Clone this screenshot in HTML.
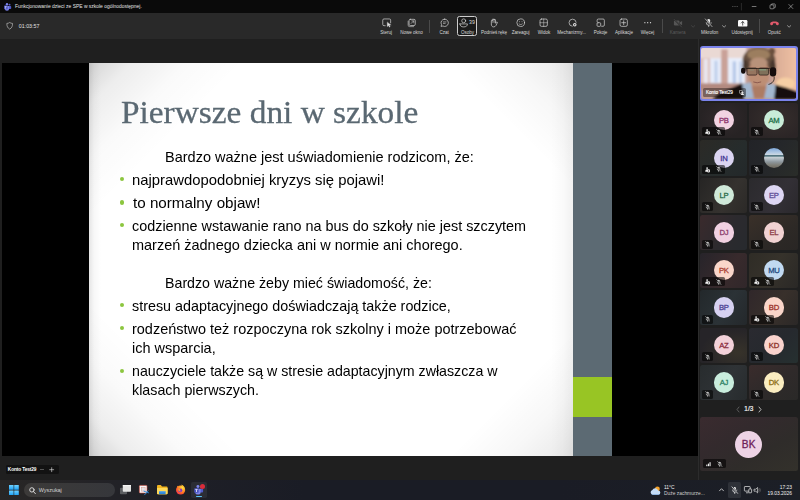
<!DOCTYPE html>
<html lang="pl"><head><meta charset="utf-8"><title>Funkcjonowanie dzieci ze SPE w szkole ogólnodostępnej.</title>
<style>
*{box-sizing:border-box}
html,body{margin:0;padding:0}
body{width:800px;height:500px;overflow:hidden;position:relative;background:#1f1f1f;font-family:"Liberation Sans",sans-serif;color:#fff}
.abs{position:absolute}
#titlebar{left:0;top:0;width:800px;height:13px;background:#0a0a0a}
#toolbar{left:0;top:13px;width:800px;height:25.5px;background:#292929}
.tl{position:absolute;white-space:nowrap;line-height:1}
.lbl{position:absolute;top:29.9px;font-size:4.6px;line-height:5px;color:#d6d6d6;white-space:nowrap;transform:translateX(-50%);letter-spacing:-0.05px}
.ico{position:absolute;overflow:visible}
.sep{position:absolute;width:0.6px;background:#4a4a4a}
#stage{left:2px;top:63px;width:696px;height:392.8px;background:#000}
#slide{left:89px;top:63px;width:484px;height:392.8px;background:#fff;overflow:hidden}
#strip{left:573px;top:63px;width:39px;height:392.8px;background:#5c6a73}
#green{left:573px;top:377px;width:39px;height:40px;background:#98c524}
.t{position:absolute;white-space:nowrap;color:#000;transform-origin:0 50%;line-height:20px;height:20px}
.bul{position:absolute;width:4.2px;height:4.2px;border-radius:50%;background:#8cc63f;left:119.9px}
.tile{position:absolute;border-radius:2.5px;overflow:hidden}
.av{position:absolute;border-radius:50%;text-align:center;font-weight:bold;letter-spacing:-0.1px}
.ib{position:absolute;background:rgba(0,0,0,.56);border-radius:1.6px}
#taskbar{left:0;top:479.7px;width:800px;height:20.3px;background:linear-gradient(90deg,#282625 0,#252427 9%,#1f2027 20%,#1a1c25 38%,#1a1c25 70%,#1c1f26 100%)}
</style></head>
<body>
<div id="titlebar" class="abs"></div>
<svg class="ico" style="left:4.3px;top:2.6px" width="7.4" height="7.8" viewBox="0 0 74 78"><circle cx="56" cy="17" r="9" fill="#5b5fc7"/><circle cx="30" cy="12" r="12" fill="#7b83eb"/><rect x="46" y="30" width="26" height="30" rx="8" fill="#5059c9"/><path d="M8 30h44v26a22 22 0 0 1-44 0z" fill="#7b83eb"/><rect x="0" y="26" width="36" height="36" rx="4" fill="#4b53bc"/><path d="M9 35h18v5h-6v17h-6V40H9z" fill="#fff"/></svg>
<div class="tl" style="left:15px;top:5.2px;font-size:4.95px;color:#e4e4e4">Funkcjonowanie dzieci ze SPE w szkole ogólnodostępnej.</div>
<svg class="ico" style="left:726px;top:0" width="74" height="13" viewBox="0 0 74 13" fill="none" stroke="#e0e0e0" stroke-width=".5"><g fill="#7a7a7a" stroke="none"><circle cx="6.9" cy="6.5" r=".5"/><circle cx="9" cy="6.5" r=".5"/><circle cx="11.1" cy="6.5" r=".5"/></g><path d="M15.4 3v7.4" stroke="#4a4a4a"/><path d="M25.8 6.5h4.6"/><rect x="44" y="4.9" width="3.9" height="3.9" rx=".8"/><path d="M45.3 4.9V4.6a.7.7 0 0 1 .7-.7h2.4a.9.9 0 0 1 .9.9v2.3a.7.7 0 0 1-.7.7h-.5"/><path d="M62.6 4.2l4.5 4.6M67.1 4.2l-4.5 4.6"/></svg>
<div id="toolbar" class="abs"></div>
<svg class="ico" style="left:5.9px;top:22px" width="7.4" height="7.6" viewBox="0 0 74 80" fill="none" stroke="#d8d8d8" stroke-width="6"><path d="M37 5c8 7 18 9 30 10 0 30-8 48-30 60C15 63 7 45 7 15c12-1 22-3 30-10z"/></svg>
<div class="tl" style="left:18.8px;top:24.1px;font-size:5.3px;color:#e0e0e0">01:03:57</div>
<svg class="ico" style="left:381.50px;top:18.15px" width="9.40" height="9.40" viewBox="0 0 10 10" stroke="#dcdcdc" stroke-width=".72" fill="none" stroke-linecap="round" stroke-linejoin="round"><path d="M3.4 8.2H2.1A1.3 1.3 0 0 1 .8 6.9V2.3A1.3 1.3 0 0 1 2.1 1h5.8a1.3 1.3 0 0 1 1.3 1.3v2.9"/><path d="M5.6 4.6v4.6l1.3-1.1 1 1.7.8-.45-1-1.65 1.7-.2z" fill="#e2e2e2" stroke-width=".3"/></svg>
<div class="lbl" style="left:386.2px">Steruj</div>
<svg class="ico" style="left:406.90px;top:18.15px" width="9.40" height="9.40" viewBox="0 0 10 10" stroke="#dcdcdc" stroke-width=".72" fill="none" stroke-linecap="round" stroke-linejoin="round"><rect x="2.2" y="1.4" width="6.6" height="6.6" rx="1.3"/><path d="M1.2 3.4v4.2a1.6 1.6 0 0 0 1.6 1.6h4.2" stroke-width=".6"/><path d="M4.4 5.8l2.7-2.7M5.1 3h2.1v2.1" stroke-width=".6"/></svg>
<div class="lbl" style="left:411.5px">Nowe okno</div>
<div class="sep" style="left:429.2px;top:19.5px;height:13.2px"></div>
<svg class="ico" style="left:439.80px;top:18.15px" width="9.40" height="9.40" viewBox="0 0 10 10" stroke="#dcdcdc" stroke-width=".72" fill="none" stroke-linecap="round" stroke-linejoin="round"><path d="M5 1.2a3.9 3.9 0 1 1-1.9 7.3L1.1 9l.55-1.9A3.9 3.9 0 0 1 5 1.2z"/><path d="M3.6 4.2h2.8M3.6 5.8h1.9" stroke-width=".6"/></svg>
<div class="lbl" style="left:444px">Czat</div>
<div class="abs" style="left:457.2px;top:15.8px;width:20.2px;height:20.1px;border:1.05px solid #cdcdcd;border-radius:2.4px;background:#1b1b1b"></div>
<svg class="ico" style="left:459.20px;top:18.15px" width="9.40" height="9.40" viewBox="0 0 10 10" stroke="#dcdcdc" stroke-width=".72" fill="none" stroke-linecap="round" stroke-linejoin="round"><circle cx="5" cy="3" r="2.1"/><path d="M1 6.300h8c0 2.100-1.500 3.200-4 3.200s-4-1.100-4-3.200z"/></svg>
<div class="tl" style="left:469.1px;top:20.4px;font-size:5.2px;color:#dedede;letter-spacing:-.1px">39</div>
<div class="lbl" style="left:467.4px">Osoby</div>
<svg class="ico" style="left:489.20px;top:17.95px" width="9.40" height="9.40" viewBox="0 0 10 10" stroke="#dcdcdc" stroke-width=".72" fill="none" stroke-linecap="round" stroke-linejoin="round"><path d="M2.5 6.3V3a.55.55 0 0 1 1.1 0V1.7a.55.55 0 0 1 1.1 0V1.5a.55.55 0 0 1 1.1 0v.6a.55.55 0 0 1 1.1 0v3.5l1-1.200a.6.6 0 0 1 .9.800L7.400 8C6.800 9 6 9.500 4.900 9.500 3.400 9.500 2.500 8.400 2.500 7z"/><path d="M3.600 3v1.800M4.700 1.700v3M5.800 2.100v2.700" stroke-width=".4"/></svg>
<div class="lbl" style="left:494px">Podnieś rękę</div>
<svg class="ico" style="left:515.70px;top:18.15px" width="9.40" height="9.40" viewBox="0 0 10 10" stroke="#dcdcdc" stroke-width=".72" fill="none" stroke-linecap="round" stroke-linejoin="round"><circle cx="5" cy="5" r="4.1"/><circle cx="3.6" cy="4" r=".45" fill="#e2e2e2" stroke="none"/><circle cx="6.4" cy="4" r=".45" fill="#e2e2e2" stroke="none"/><path d="M3.300 6.300c1 1 2.400 1 3.400 0" stroke-width=".6"/></svg>
<div class="lbl" style="left:520.7px">Zareaguj</div>
<svg class="ico" style="left:539.20px;top:18.15px" width="9.40" height="9.40" viewBox="0 0 10 10" stroke="#dcdcdc" stroke-width=".72" fill="none" stroke-linecap="round" stroke-linejoin="round"><rect x="1.100" y="1.100" width="7.800" height="7.800" rx="1.500"/><path d="M5 1.100v7.800M1.100 5h7.800" stroke-width=".5"/></svg>
<div class="lbl" style="left:544px">Widok</div>
<svg class="ico" style="left:567.80px;top:18.15px" width="9.40" height="9.40" viewBox="0 0 10 10" stroke="#dcdcdc" stroke-width=".72" fill="none" stroke-linecap="round" stroke-linejoin="round"><path d="M8.700 4.600A3.800 3.800 0 1 0 4.500 8.800"/><circle cx="7.200" cy="7.200" r="1.900" fill="#e2e2e2" stroke="none"/><circle cx="7.200" cy="7.200" r=".7" fill="#292929" stroke="none"/></svg>
<div class="lbl" style="left:571.6px">Mechanizmy...</div>
<svg class="ico" style="left:596.10px;top:18.15px" width="9.40" height="9.40" viewBox="0 0 10 10" stroke="#dcdcdc" stroke-width=".72" fill="none" stroke-linecap="round" stroke-linejoin="round"><path d="M1.200 4V2.400a1.300 1.300 0 0 1 1.300-1.300h5.100a1.300 1.300 0 0 1 1.300 1.300v5.100a1.300 1.300 0 0 1-1.300 1.300H6"/><rect x="1.100" y="5" width="3.900" height="3.900" rx="1"/></svg>
<div class="lbl" style="left:600.5px">Pokoje</div>
<svg class="ico" style="left:619.20px;top:18.15px" width="9.40" height="9.40" viewBox="0 0 10 10" stroke="#dcdcdc" stroke-width=".72" fill="none" stroke-linecap="round" stroke-linejoin="round"><rect x="1.100" y="1.100" width="7.800" height="7.800" rx="1.600"/><path d="M5 2.900v4.200M2.900 5h4.200" stroke-width=".7"/></svg>
<div class="lbl" style="left:624px">Aplikacje</div>
<svg class="ico" style="left:643.00px;top:18.15px" width="9.40" height="9.40" viewBox="0 0 10 10" stroke="#dcdcdc" stroke-width=".72" fill="none" stroke-linecap="round" stroke-linejoin="round"><g fill="#e2e2e2" stroke="none"><circle cx="2" cy="5" r=".65"/><circle cx="5" cy="5" r=".65"/><circle cx="8" cy="5" r=".65"/></g></svg>
<div class="lbl" style="left:647.4px">Więcej</div>
<div class="sep" style="left:662.3px;top:19.3px;height:13.4px"></div>
<svg class="ico" style="left:672.8px;top:17.6px" width="10" height="10" viewBox="0 0 10 10" fill="#555" stroke="#555" stroke-width=".6" stroke-linecap="round"><rect x=".9" y="2.600" width="5.600" height="5" rx="1.100" stroke="none"/><path d="M6.900 4.300l2.200-1.300v4.200L6.900 5.900z" stroke="none"/><path d="M1.200 1.400l7.400 7.600" stroke="#292929" stroke-width="1.300"/><path d="M1.200 1.400l7.400 7.600"/></svg>
<div class="lbl" style="left:677.6px;color:#5c5c5c">Kamera</div>
<svg class="ico" style="left:690.6px;top:24.7px" width="4.2" height="2.8" viewBox="0 0 5.200 3.400" fill="none" stroke="#4e4e4e" stroke-width=".8" stroke-linecap="round" stroke-linejoin="round"><path d="M.6.800l2 1.900 2-1.900"/></svg>
<svg class="ico" style="left:704.40px;top:18.35px" width="9.40" height="9.40" viewBox="0 0 10 10" stroke="#dcdcdc" stroke-width=".72" fill="none" stroke-linecap="round" stroke-linejoin="round"><rect x="3.500" y="1" width="3" height="5" rx="1.500" fill="#e2e2e2" stroke="none"/><path d="M2.300 5a2.700 2.700 0 0 0 5.400 0M5 7.700v1.500"/><path d="M1.400 1l7.200 8.200" stroke="#292929" stroke-width="1.500"/><path d="M1.400 1l7.200 8.200" stroke-width=".7"/></svg>
<div class="lbl" style="left:709.6px">Mikrofon</div>
<svg class="ico" style="left:722.2px;top:24.7px" width="4.2" height="2.8" viewBox="0 0 5.200 3.400" fill="none" stroke="#d0d0d0" stroke-width=".8" stroke-linecap="round" stroke-linejoin="round"><path d="M.6.800l2 1.900 2-1.900"/></svg>
<svg class="ico" style="left:737.8px;top:19.7px" width="9.400" height="6.600" viewBox="0 0 9.400 6.600"><rect width="9.400" height="6.600" rx="1.200" fill="#fafafa"/><path d="M4.700 5.200V1.700M3.300 3l1.400-1.400L6.100 3" fill="none" stroke="#222" stroke-width=".75" stroke-linecap="round" stroke-linejoin="round"/></svg>
<div class="lbl" style="left:742.1px">Udostępnij</div>
<div class="sep" style="left:758.5px;top:19.400px;height:13.400px"></div>
<svg class="ico" style="left:769.6px;top:20.500px" width="9" height="4.600" viewBox="0 0 90 46"><path d="M45 4C27 4 12 9 4 18c-3 4-3 9-1 14l2 6c1 3 4 5 7 4l12-3c3-1 5-3 5-6l1-8c5-2 10-2 15-2s10 0 15 2l1 8c0 3 2 5 5 6l12 3c3 1 6-1 7-4l2-6c2-5 2-10-1-14C78 9 63 4 45 4z" fill="#e25a6c"/></svg>
<div class="lbl" style="left:774.2px">Opuść</div>
<svg class="ico" style="left:787.1px;top:24.7px" width="4.2" height="2.8" viewBox="0 0 5.200 3.400" fill="none" stroke="#d0d0d0" stroke-width=".8" stroke-linecap="round" stroke-linejoin="round"><path d="M.6.800l2 1.900 2-1.900"/></svg>
<div id="stage" class="abs"></div>
<div id="slide" class="abs"><div class="abs" style="inset:0;background:linear-gradient(90deg,rgba(0,0,0,.10) 0,rgba(0,0,0,.03) 5px,rgba(0,0,0,0) 12px),linear-gradient(270deg,rgba(0,0,0,.055) 0,rgba(0,0,0,.02) 10px,rgba(0,0,0,0) 22px),linear-gradient(135deg,rgba(0,0,0,.17) 0,rgba(0,0,0,.07) 30px,rgba(0,0,0,.02) 70px,rgba(0,0,0,0) 110px),linear-gradient(45deg,rgba(0,0,0,.17) 0,rgba(0,0,0,.07) 30px,rgba(0,0,0,.02) 70px,rgba(0,0,0,0) 110px),linear-gradient(225deg,rgba(0,0,0,.09) 0,rgba(0,0,0,.03) 45px,rgba(0,0,0,0) 88px),linear-gradient(315deg,rgba(0,0,0,.09) 0,rgba(0,0,0,.03) 45px,rgba(0,0,0,0) 88px),#fff"></div></div>
<div id="strip" class="abs"></div><div id="green" class="abs"></div>
<div id="ttl" class="t" style="left:120.58px;top:92.30px;height:40px;line-height:40px;font-family:'Liberation Serif',serif;font-size:32px;color:#5a6872;-webkit-text-stroke:.3px #5a6872;transform:scaleX(1.0423)">Pierwsze dni w szkole</div>
<div id="l1" class="t" style="left:164.98px;top:146.81px;font-size:14.2px;transform:scaleX(1.0227)">Bardzo ważne jest uświadomienie rodzicom, że:</div>
<div id="l2" class="t" style="left:131.95px;top:169.81px;font-size:14.2px;transform:scaleX(1.0459)">najprawdopodobniej kryzys się pojawi!</div>
<div class="bul" style="top:177.2px"></div>
<div id="l3" class="t" style="left:132.99px;top:193.01px;font-size:14.2px;transform:scaleX(1.0713)">to normalny objaw!</div>
<div class="bul" style="top:200.4px"></div>
<div id="l4" class="t" style="left:132.43px;top:215.91px;font-size:14.2px;transform:scaleX(1.0136)">codzienne wstawanie rano na bus do szkoły nie jest szczytem</div>
<div class="bul" style="top:223.3px"></div>
<div id="l5" class="t" style="left:132.02px;top:235.31px;font-size:14.2px;transform:scaleX(1.0202)">marzeń żadnego dziecka ani w normie ani chorego.</div>
<div id="l6" class="t" style="left:165.15px;top:273.01px;font-size:14.2px;transform:scaleX(1.0014)">Bardzo ważne żeby mieć świadomość, że:</div>
<div id="l7" class="t" style="left:132.35px;top:295.81px;font-size:14.2px;transform:scaleX(1.0107)">stresu adaptacyjnego doświadczają także rodzice,</div>
<div class="bul" style="top:303.2px"></div>
<div id="l8" class="t" style="left:132.06px;top:318.61px;font-size:14.2px;transform:scaleX(1.0199)">rodzeństwo też rozpoczyna rok szkolny i może potrzebować</div>
<div class="bul" style="top:326.0px"></div>
<div id="l9" class="t" style="left:132.08px;top:338.21px;font-size:14.2px;transform:scaleX(1.0205)">ich wsparcia,</div>
<div id="l10" class="t" style="left:132.12px;top:361.21px;font-size:14.2px;transform:scaleX(1.0011)">nauczyciele także są w stresie adaptacyjnym zwłaszcza w</div>
<div class="bul" style="top:368.6px"></div>
<div id="l11" class="t" style="left:132.20px;top:380.21px;font-size:14.2px;transform:scaleX(1.0066)">klasach pierwszych.</div>
<div class="abs" style="left:698.3px;top:38.500px;width:.7px;height:441.500px;background:#2c2c2c"></div>
<div class="tile" style="left:699.8px;top:46.4px;width:97.8px;height:54.2px;border-radius:3px;background:#7b83eb">
<svg class="abs" style="left:1.3px;top:1.3px;border-radius:1.8px" width="95.2" height="51.6" viewBox="0 0 95.8 52.2">
<defs><filter id="bl" x="-20%" y="-20%" width="140%" height="140%"><feGaussianBlur stdDeviation="1.2"/></filter><filter id="bl2" x="-20%" y="-20%" width="140%" height="140%"><feGaussianBlur stdDeviation=".55"/></filter>
<linearGradient id="wall" x1="0" x2="1"><stop offset="0" stop-color="#d9ab94"/><stop offset="1" stop-color="#f0c3a5"/></linearGradient></defs>
<rect width="96" height="53" fill="#c29d94"/><g filter="url(#bl)"><rect x="-2.8" y="-2.4" width="48.5" height="13.4" fill="#ead9d4" /><rect x="-2.8" y="10.4" width="12.1" height="26.8" fill="#dcbcb4" /><rect x="2.3" y="11.0" width="4.5" height="24.9" fill="#e9e6ee" /><rect x="8.9" y="10.4" width="11.2" height="25.3" fill="#e6ecfa" /><rect x="13.5" y="12.9" width="2.8" height="21.7" fill="#bccdea" /><rect x="20.2" y="1.4" width="6.6" height="35.7" fill="#c9a198" /><rect x="27.0" y="10.1" width="17.6" height="26.0" fill="#e8eefb" /><rect x="31.9" y="13.5" width="3.1" height="22.3" fill="#b2c6e7" /><rect x="38.3" y="13.5" width="2.9" height="22.3" fill="#c2d2ed" /><rect x="-2.8" y="35.9" width="51.0" height="6.6" fill="#b38a80" /><rect x="72.5" y="-2.4" width="26.8" height="45.9" fill="url(#wall)" /><ellipse cx="85.2" cy="35.9" rx="9.6" ry="6.1" fill="#f6cfa4" /><ellipse cx="58.4" cy="12.3" rx="16.6" ry="13.1" fill="#67503f" /><ellipse cx="58.2" cy="6.5" rx="11.7" ry="5.7" fill="#9c7e5e" /><ellipse cx="71.8" cy="3.3" rx="3.2" ry="3.6" fill="#6a4f3c" /><ellipse cx="44.6" cy="18.0" rx="2.8" ry="6.4" fill="#4a382e" /><ellipse cx="72.5" cy="19.3" rx="3.1" ry="7.7" fill="#4a382e" /><ellipse cx="58.2" cy="26.7" rx="10.7" ry="15.1" fill="#bd8e74" /><ellipse cx="58.2" cy="14.8" rx="8.9" ry="5.1" fill="#b8927a" /><path d="M50.8 38.4 L66.1 38.4 L68.6 51.2 L48.2 51.2z" fill="#ad7b64" /><path d="M41.2 36.5 L50.1 34.6 L53.3 51.2 L39.3 51.2z" fill="#a3b7cf" /><path d="M66.7 35.9 L75.6 37.1 L78.8 51.2 L63.5 51.2z" fill="#a3b7cf" /><path d="M11.2 51.8 L18.2 46.1 L41.2 35.6 L43.8 51.8z" fill="#14100f" /><path d="M73.7 51.8 L75.3 37.1 L86.5 40.3 L98.0 44.2 L98.0 51.8z" fill="#14100f" /></g><g filter="url(#bl2)"><rect x="40.3" y="20.0" width="4.3" height="6.1" fill="#120e0d" rx="2"/><rect x="69.4" y="19.5" width="6.4" height="9.4" fill="#120e0d" rx="3"/><path d="M73.7 28.9C74.4 33.3 71.8 35.9 68.0 36.9" stroke="#1a1412" stroke-width=".8" fill="none"/><rect x="46.3" y="20.3" width="10.2" height="7.1" fill="#96745f" rx="1.6" stroke="#2a1e19" stroke-width=".75"/><rect x="58.2" y="20.3" width="9.9" height="7.1" fill="#7f705a" rx="1.6" stroke="#2a1e19" stroke-width=".75"/><path d="M45.0 20.7H69.3" stroke="#2a1e19" stroke-width=".9"/><path d="M58.2 22.1h7.4" stroke="#86b897" stroke-width="1.1" opacity=".7"/><path d="M48.5 22.3h4.8" stroke="#86b897" stroke-width=".9" opacity=".35"/><path d="M52.7 34.3q3.8 1.8 7.9 0" stroke="#85544a" stroke-width=".9" fill="none"/></g>
</svg>
<div class="abs" style="left:3.3px;top:42px;width:42.6px;height:9px;background:rgba(22,16,15,.42);border-radius:1.5px"></div>
<div class="tl" style="left:6.1px;top:44.2px;font-size:4.7px;font-weight:normal;-webkit-text-stroke:.15px #fff;color:#fff;letter-spacing:-.02px">Konto Test29</div>
<svg class="abs" style="left:38.8px;top:43.6px" width="5.4" height="5.4" viewBox="0 0 56 56" fill="none" stroke="#f0f0f0" stroke-width="6"><rect x="4" y="4" width="30" height="30" rx="5"/><circle cx="36" cy="28" r="8" fill="#f0f0f0"/><path d="M22 52c0-10 6-14 14-14s14 4 14 14z" fill="#f0f0f0"/></svg>
</div>
<div class="tile" style="left:700.0px;top:102.6px;width:47.3px;height:35.4px;background:radial-gradient(ellipse at 50% 45%,#322a2c,#272324 70%)"><div class="av" style="left:13.7px;top:7.400px;width:20.400px;height:20.400px;background:#f2d3e2;color:#8a2f68;-webkit-text-stroke:.28px #8a2f68;font-weight:normal;letter-spacing:-.3px;font-size:7.700px;line-height:21.500px">PB</div><div class="ib" style="left:1.700px;top:24.600px;width:23px;height:9.300px"></div><svg class="abs" style="left:4.800px;top:26.400px" width="5.600" height="6" viewBox="0 0 5.600 6"><g fill="#f4f4f4"><circle cx="2.1" cy="1.1" r=".85"/><path d="M.3 4.300c0-1.300.7-2 1.800-2 .6 0 1 .2 1.300.5L2.400 4.700H.3z"/><circle cx="3.700" cy="3.900" r="1.650"/><circle cx="3.700" cy="3.900" r=".6" fill="#1a1818"/></g></svg><svg class="abs" style="left:16.200px;top:26.200px" width="5.600" height="6" viewBox="0 0 5.600 6"><g fill="none" stroke="#f2f2f2" stroke-width=".55" stroke-linecap="round"><rect x="1.900" y=".7" width="1.700" height="2.800" rx=".85" fill="#f2f2f2" stroke="none"/><path d="M1.200 3a1.550 1.550 0 0 0 3.100 0M2.750 4.600v.9"/><path d="M.7.600L4.900 5.400" stroke="#151515" stroke-width="1.100"/><path d="M.7.600L4.900 5.400"/></g></svg></div>
<div class="tile" style="left:749.3px;top:102.6px;width:48.3px;height:35.4px;background:radial-gradient(ellipse at 55% 45%,#372f2d,#2b2526 75%)"><div class="av" style="left:14.4px;top:7.400px;width:20.400px;height:20.400px;background:#c9ecd8;color:#1e7048;-webkit-text-stroke:.28px #1e7048;font-weight:normal;letter-spacing:-.3px;font-size:7.700px;line-height:21.500px">AM</div><div class="ib" style="left:2px;top:24.600px;width:11.400px;height:9.300px"></div><svg class="abs" style="left:4.900px;top:26.200px" width="5.600" height="6" viewBox="0 0 5.600 6"><g fill="none" stroke="#f2f2f2" stroke-width=".55" stroke-linecap="round"><rect x="1.900" y=".7" width="1.700" height="2.800" rx=".85" fill="#f2f2f2" stroke="none"/><path d="M1.200 3a1.550 1.550 0 0 0 3.100 0M2.750 4.600v.9"/><path d="M.7.600L4.900 5.400" stroke="#151515" stroke-width="1.100"/><path d="M.7.600L4.900 5.400"/></g></svg></div>
<div class="tile" style="left:700.0px;top:140.2px;width:47.3px;height:35.4px;background:linear-gradient(135deg,#2b2a26,#262c2c 60%,#23282a)"><div class="av" style="left:13.7px;top:7.400px;width:20.400px;height:20.400px;background:#dad4f1;color:#3e3392;-webkit-text-stroke:.28px #3e3392;font-weight:normal;letter-spacing:-.3px;font-size:7.700px;line-height:21.500px">IN</div><div class="ib" style="left:1.700px;top:24.600px;width:23px;height:9.300px"></div><svg class="abs" style="left:4.800px;top:26.400px" width="5.600" height="6" viewBox="0 0 5.600 6"><g fill="#f4f4f4"><circle cx="2.1" cy="1.1" r=".85"/><path d="M.3 4.300c0-1.300.7-2 1.800-2 .6 0 1 .2 1.300.5L2.400 4.700H.3z"/><circle cx="3.700" cy="3.900" r="1.650"/><circle cx="3.700" cy="3.900" r=".6" fill="#1a1818"/></g></svg><svg class="abs" style="left:16.200px;top:26.200px" width="5.600" height="6" viewBox="0 0 5.600 6"><g fill="none" stroke="#f2f2f2" stroke-width=".55" stroke-linecap="round"><rect x="1.900" y=".7" width="1.700" height="2.800" rx=".85" fill="#f2f2f2" stroke="none"/><path d="M1.200 3a1.550 1.550 0 0 0 3.100 0M2.750 4.600v.9"/><path d="M.7.600L4.900 5.400" stroke="#151515" stroke-width="1.100"/><path d="M.7.600L4.900 5.400"/></g></svg></div>
<div class="tile" style="left:749.3px;top:140.2px;width:48.3px;height:35.4px;background:linear-gradient(120deg,#222327,#25272a 50%,#2a2d29)"><div class="av" style="left:14.4px;top:7.400px;width:20.400px;height:20.400px;background:linear-gradient(180deg,#7da7d9 0,#b5cbe3 24%,#cad6e1 33%,#4f6f7c 36%,#5f8088 41%,#c5cdd2 47%,#aab4bb 58%,#8c959b 70%,#7f7f78 85%,#6f6a60 100%)"></div><div class="ib" style="left:2px;top:24.600px;width:11.400px;height:9.300px"></div><svg class="abs" style="left:4.900px;top:26.200px" width="5.600" height="6" viewBox="0 0 5.600 6"><g fill="none" stroke="#f2f2f2" stroke-width=".55" stroke-linecap="round"><rect x="1.900" y=".7" width="1.700" height="2.800" rx=".85" fill="#f2f2f2" stroke="none"/><path d="M1.200 3a1.550 1.550 0 0 0 3.100 0M2.750 4.600v.9"/><path d="M.7.600L4.900 5.400" stroke="#151515" stroke-width="1.100"/><path d="M.7.600L4.900 5.400"/></g></svg></div>
<div class="tile" style="left:700.0px;top:177.6px;width:47.3px;height:35.4px;background:linear-gradient(120deg,#262524,#35322f 60%,#2b2927)"><div class="av" style="left:13.7px;top:7.400px;width:20.400px;height:20.400px;background:#cfe9d9;color:#276b45;-webkit-text-stroke:.28px #276b45;font-weight:normal;letter-spacing:-.3px;font-size:7.700px;line-height:21.500px">LP</div><div class="ib" style="left:2px;top:24.600px;width:11.400px;height:9.300px"></div><svg class="abs" style="left:4.900px;top:26.200px" width="5.600" height="6" viewBox="0 0 5.600 6"><g fill="none" stroke="#f2f2f2" stroke-width=".55" stroke-linecap="round"><rect x="1.900" y=".7" width="1.700" height="2.800" rx=".85" fill="#f2f2f2" stroke="none"/><path d="M1.200 3a1.550 1.550 0 0 0 3.100 0M2.750 4.600v.9"/><path d="M.7.600L4.900 5.400" stroke="#151515" stroke-width="1.100"/><path d="M.7.600L4.900 5.400"/></g></svg></div>
<div class="tile" style="left:749.3px;top:177.6px;width:48.3px;height:35.4px;background:linear-gradient(120deg,#2b2a2d,#333036 60%,#2a282c)"><div class="av" style="left:14.4px;top:7.400px;width:20.400px;height:20.400px;background:#ddd6f3;color:#5b4c95;-webkit-text-stroke:.28px #5b4c95;font-weight:normal;letter-spacing:-.3px;font-size:7.700px;line-height:21.500px">EP</div><div class="ib" style="left:2px;top:24.600px;width:11.400px;height:9.300px"></div><svg class="abs" style="left:4.900px;top:26.200px" width="5.600" height="6" viewBox="0 0 5.600 6"><g fill="none" stroke="#f2f2f2" stroke-width=".55" stroke-linecap="round"><rect x="1.900" y=".7" width="1.700" height="2.800" rx=".85" fill="#f2f2f2" stroke="none"/><path d="M1.200 3a1.550 1.550 0 0 0 3.100 0M2.750 4.600v.9"/><path d="M.7.600L4.900 5.400" stroke="#151515" stroke-width="1.100"/><path d="M.7.600L4.900 5.400"/></g></svg></div>
<div class="tile" style="left:700.0px;top:215.0px;width:47.3px;height:35.4px;background:linear-gradient(120deg,#3a2a2c,#2c2a2e 55%,#272a2e)"><div class="av" style="left:13.7px;top:7.400px;width:20.400px;height:20.400px;background:#f1d1e2;color:#8b3a6a;-webkit-text-stroke:.28px #8b3a6a;font-weight:normal;letter-spacing:-.3px;font-size:7.700px;line-height:21.500px">DJ</div><div class="ib" style="left:2px;top:24.600px;width:11.400px;height:9.300px"></div><svg class="abs" style="left:4.900px;top:26.200px" width="5.600" height="6" viewBox="0 0 5.600 6"><g fill="none" stroke="#f2f2f2" stroke-width=".55" stroke-linecap="round"><rect x="1.900" y=".7" width="1.700" height="2.800" rx=".85" fill="#f2f2f2" stroke="none"/><path d="M1.200 3a1.550 1.550 0 0 0 3.100 0M2.750 4.600v.9"/><path d="M.7.600L4.900 5.400" stroke="#151515" stroke-width="1.100"/><path d="M.7.600L4.900 5.400"/></g></svg></div>
<div class="tile" style="left:749.3px;top:215.0px;width:48.3px;height:35.4px;background:linear-gradient(150deg,#3a3029,#2d2926 60%,#292624)"><div class="av" style="left:14.4px;top:7.400px;width:20.400px;height:20.400px;background:#f1d2d2;color:#8c3a44;-webkit-text-stroke:.28px #8c3a44;font-weight:normal;letter-spacing:-.3px;font-size:7.700px;line-height:21.500px">EL</div><div class="ib" style="left:2px;top:24.600px;width:11.400px;height:9.300px"></div><svg class="abs" style="left:4.900px;top:26.200px" width="5.600" height="6" viewBox="0 0 5.600 6"><g fill="none" stroke="#f2f2f2" stroke-width=".55" stroke-linecap="round"><rect x="1.900" y=".7" width="1.700" height="2.800" rx=".85" fill="#f2f2f2" stroke="none"/><path d="M1.200 3a1.550 1.550 0 0 0 3.100 0M2.750 4.600v.9"/><path d="M.7.600L4.900 5.400" stroke="#151515" stroke-width="1.100"/><path d="M.7.600L4.900 5.400"/></g></svg></div>
<div class="tile" style="left:700.0px;top:252.5px;width:47.3px;height:35.4px;background:linear-gradient(120deg,#27242a,#382a2c 60%,#30272a)"><div class="av" style="left:13.7px;top:7.400px;width:20.400px;height:20.400px;background:#f9d6ca;color:#a83a2c;-webkit-text-stroke:.28px #a83a2c;font-weight:normal;letter-spacing:-.3px;font-size:7.700px;line-height:21.500px">PK</div><div class="ib" style="left:1.700px;top:24.600px;width:23px;height:9.300px"></div><svg class="abs" style="left:4.800px;top:26.400px" width="5.600" height="6" viewBox="0 0 5.600 6"><g fill="#f4f4f4"><circle cx="2.1" cy="1.1" r=".85"/><path d="M.3 4.300c0-1.300.7-2 1.800-2 .6 0 1 .2 1.300.5L2.400 4.700H.3z"/><circle cx="3.700" cy="3.900" r="1.650"/><circle cx="3.700" cy="3.900" r=".6" fill="#1a1818"/></g></svg><svg class="abs" style="left:16.200px;top:26.200px" width="5.600" height="6" viewBox="0 0 5.600 6"><g fill="none" stroke="#f2f2f2" stroke-width=".55" stroke-linecap="round"><rect x="1.900" y=".7" width="1.700" height="2.800" rx=".85" fill="#f2f2f2" stroke="none"/><path d="M1.200 3a1.550 1.550 0 0 0 3.100 0M2.750 4.600v.9"/><path d="M.7.600L4.900 5.400" stroke="#151515" stroke-width="1.100"/><path d="M.7.600L4.900 5.400"/></g></svg></div>
<div class="tile" style="left:749.3px;top:252.5px;width:48.3px;height:35.4px;background:linear-gradient(120deg,#2f2c26,#36322b 50%,#2a2826)"><div class="av" style="left:14.4px;top:7.400px;width:20.400px;height:20.400px;background:#c1d9f1;color:#1e4a80;-webkit-text-stroke:.28px #1e4a80;font-weight:normal;letter-spacing:-.3px;font-size:7.700px;line-height:21.500px">MU</div><div class="ib" style="left:1.700px;top:24.600px;width:23px;height:9.300px"></div><svg class="abs" style="left:4.800px;top:26.400px" width="5.600" height="6" viewBox="0 0 5.600 6"><g fill="#f4f4f4"><circle cx="2.1" cy="1.1" r=".85"/><path d="M.3 4.300c0-1.300.7-2 1.800-2 .6 0 1 .2 1.300.5L2.400 4.700H.3z"/><circle cx="3.700" cy="3.900" r="1.650"/><circle cx="3.700" cy="3.900" r=".6" fill="#1a1818"/></g></svg><svg class="abs" style="left:16.200px;top:26.200px" width="5.600" height="6" viewBox="0 0 5.600 6"><g fill="none" stroke="#f2f2f2" stroke-width=".55" stroke-linecap="round"><rect x="1.900" y=".7" width="1.700" height="2.800" rx=".85" fill="#f2f2f2" stroke="none"/><path d="M1.200 3a1.550 1.550 0 0 0 3.100 0M2.750 4.600v.9"/><path d="M.7.600L4.900 5.400" stroke="#151515" stroke-width="1.100"/><path d="M.7.600L4.900 5.400"/></g></svg></div>
<div class="tile" style="left:700.0px;top:290.0px;width:47.3px;height:35.4px;background:linear-gradient(120deg,#23282b,#2b3236 55%,#24282b)"><div class="av" style="left:13.7px;top:7.400px;width:20.400px;height:20.400px;background:#d6d1f1;color:#4a3f92;-webkit-text-stroke:.28px #4a3f92;font-weight:normal;letter-spacing:-.3px;font-size:7.700px;line-height:21.500px">BP</div><div class="ib" style="left:2px;top:24.600px;width:11.400px;height:9.300px"></div><svg class="abs" style="left:4.900px;top:26.200px" width="5.600" height="6" viewBox="0 0 5.600 6"><g fill="none" stroke="#f2f2f2" stroke-width=".55" stroke-linecap="round"><rect x="1.900" y=".7" width="1.700" height="2.800" rx=".85" fill="#f2f2f2" stroke="none"/><path d="M1.200 3a1.550 1.550 0 0 0 3.100 0M2.750 4.600v.9"/><path d="M.7.600L4.900 5.400" stroke="#151515" stroke-width="1.100"/><path d="M.7.600L4.900 5.400"/></g></svg></div>
<div class="tile" style="left:749.3px;top:290.0px;width:48.3px;height:35.4px;background:linear-gradient(120deg,#30272a,#38302b 55%,#2b2827)"><div class="av" style="left:14.4px;top:7.400px;width:20.400px;height:20.400px;background:#fad5c9;color:#9a3028;-webkit-text-stroke:.28px #9a3028;font-weight:normal;letter-spacing:-.3px;font-size:7.700px;line-height:21.500px">BD</div><div class="ib" style="left:1.700px;top:24.600px;width:23px;height:9.300px"></div><svg class="abs" style="left:4.800px;top:26.400px" width="5.600" height="6" viewBox="0 0 5.600 6"><g fill="#f4f4f4"><circle cx="2.1" cy="1.1" r=".85"/><path d="M.3 4.300c0-1.300.7-2 1.800-2 .6 0 1 .2 1.300.5L2.400 4.700H.3z"/><circle cx="3.700" cy="3.900" r="1.650"/><circle cx="3.700" cy="3.900" r=".6" fill="#1a1818"/></g></svg><svg class="abs" style="left:16.200px;top:26.200px" width="5.600" height="6" viewBox="0 0 5.600 6"><g fill="none" stroke="#f2f2f2" stroke-width=".55" stroke-linecap="round"><rect x="1.900" y=".7" width="1.700" height="2.800" rx=".85" fill="#f2f2f2" stroke="none"/><path d="M1.200 3a1.550 1.550 0 0 0 3.100 0M2.750 4.600v.9"/><path d="M.7.600L4.900 5.400" stroke="#151515" stroke-width="1.100"/><path d="M.7.600L4.900 5.400"/></g></svg></div>
<div class="tile" style="left:700.0px;top:327.6px;width:47.3px;height:35.4px;background:radial-gradient(ellipse at 80% 70%,#37332a,#262428 70%)"><div class="av" style="left:13.7px;top:7.400px;width:20.400px;height:20.400px;background:#f3d1d9;color:#8a2a3c;-webkit-text-stroke:.28px #8a2a3c;font-weight:normal;letter-spacing:-.3px;font-size:7.700px;line-height:21.500px">AZ</div><div class="ib" style="left:2px;top:24.600px;width:11.400px;height:9.300px"></div><svg class="abs" style="left:4.900px;top:26.200px" width="5.600" height="6" viewBox="0 0 5.600 6"><g fill="none" stroke="#f2f2f2" stroke-width=".55" stroke-linecap="round"><rect x="1.900" y=".7" width="1.700" height="2.800" rx=".85" fill="#f2f2f2" stroke="none"/><path d="M1.200 3a1.550 1.550 0 0 0 3.100 0M2.750 4.600v.9"/><path d="M.7.600L4.900 5.400" stroke="#151515" stroke-width="1.100"/><path d="M.7.600L4.900 5.400"/></g></svg></div>
<div class="tile" style="left:749.3px;top:327.6px;width:48.3px;height:35.4px;background:linear-gradient(140deg,#2a2a30,#26292e 50%,#263030)"><div class="av" style="left:14.4px;top:7.400px;width:20.400px;height:20.400px;background:#f9d3cd;color:#8a2c22;-webkit-text-stroke:.28px #8a2c22;font-weight:normal;letter-spacing:-.3px;font-size:7.700px;line-height:21.500px">KD</div><div class="ib" style="left:2px;top:24.600px;width:11.400px;height:9.300px"></div><svg class="abs" style="left:4.900px;top:26.200px" width="5.600" height="6" viewBox="0 0 5.600 6"><g fill="none" stroke="#f2f2f2" stroke-width=".55" stroke-linecap="round"><rect x="1.900" y=".7" width="1.700" height="2.800" rx=".85" fill="#f2f2f2" stroke="none"/><path d="M1.200 3a1.550 1.550 0 0 0 3.100 0M2.750 4.600v.9"/><path d="M.7.600L4.900 5.400" stroke="#151515" stroke-width="1.100"/><path d="M.7.600L4.900 5.400"/></g></svg></div>
<div class="tile" style="left:700.0px;top:365.0px;width:47.3px;height:35.4px;background:linear-gradient(120deg,#282c2e,#2f3336 55%,#272b2d)"><div class="av" style="left:13.7px;top:7.400px;width:20.400px;height:20.400px;background:#c9eddd;color:#2a8062;-webkit-text-stroke:.28px #2a8062;font-weight:normal;letter-spacing:-.3px;font-size:7.700px;line-height:21.500px">AJ</div><div class="ib" style="left:2px;top:24.600px;width:11.400px;height:9.300px"></div><svg class="abs" style="left:4.900px;top:26.200px" width="5.600" height="6" viewBox="0 0 5.600 6"><g fill="none" stroke="#f2f2f2" stroke-width=".55" stroke-linecap="round"><rect x="1.900" y=".7" width="1.700" height="2.800" rx=".85" fill="#f2f2f2" stroke="none"/><path d="M1.200 3a1.550 1.550 0 0 0 3.100 0M2.750 4.600v.9"/><path d="M.7.600L4.900 5.400" stroke="#151515" stroke-width="1.100"/><path d="M.7.600L4.900 5.400"/></g></svg></div>
<div class="tile" style="left:749.3px;top:365.0px;width:48.3px;height:35.4px;background:linear-gradient(150deg,#3a2c2c,#2f2a2a 50%,#2a2928)"><div class="av" style="left:14.4px;top:7.400px;width:20.400px;height:20.400px;background:#fbedc1;color:#8a6a12;-webkit-text-stroke:.28px #8a6a12;font-weight:normal;letter-spacing:-.3px;font-size:7.700px;line-height:21.500px">DK</div><div class="ib" style="left:2px;top:24.600px;width:11.400px;height:9.300px"></div><svg class="abs" style="left:4.900px;top:26.200px" width="5.600" height="6" viewBox="0 0 5.600 6"><g fill="none" stroke="#f2f2f2" stroke-width=".55" stroke-linecap="round"><rect x="1.900" y=".7" width="1.700" height="2.800" rx=".85" fill="#f2f2f2" stroke="none"/><path d="M1.200 3a1.550 1.550 0 0 0 3.100 0M2.750 4.600v.9"/><path d="M.7.600L4.900 5.400" stroke="#151515" stroke-width="1.100"/><path d="M.7.600L4.900 5.400"/></g></svg></div>
<svg class="ico" style="left:735.500px;top:405.600px" width="4" height="7" viewBox="0 0 4 7" fill="none" stroke="#6a6a6a" stroke-width=".8" stroke-linecap="round" stroke-linejoin="round"><path d="M3 1L1 3.500 3 6"/></svg>
<div class="tl" style="left:748.800px;top:405.800px;font-size:6.400px;font-weight:normal;-webkit-text-stroke:.2px #f0f0f0;color:#f0f0f0;transform:translateX(-50%);letter-spacing:.05px">1/3</div>
<svg class="ico" style="left:758px;top:405.600px" width="4" height="7" viewBox="0 0 4 7" fill="none" stroke="#d8d8d8" stroke-width=".8" stroke-linecap="round" stroke-linejoin="round"><path d="M1 1l2 2.500L1 6"/></svg>
<div class="tile" style="left:700px;top:417.400px;width:97.600px;height:54.100px;background:linear-gradient(150deg,#3a2b2f 0,#332a2d 35%,#2f2c2a 65%,#33312b 100%)"><div class="av" style="left:35.200px;top:13.800px;width:27.200px;height:27.200px;background:#edd3e5;color:#6e2159;font-size:10.200px;font-weight:normal;-webkit-text-stroke:.3px #6e2159;line-height:28.400px;letter-spacing:.2px">BK</div><div class="ib" style="left:2.900px;top:41.600px;width:23px;height:9.500px"></div><svg class="abs" style="left:6.200px;top:43.600px" width="5.600" height="5.600" viewBox="0 0 5.600 5.600" fill="#f2f2f2"><rect x=".3" y="3.600" width="1.100" height="1.600"/><rect x="1.900" y="2.600" width="1.100" height="2.600"/><rect x="3.500" y="1.200" width="1.100" height="4"/></svg><svg class="abs" style="left:17px;top:43.300px" width="5.600" height="6" viewBox="0 0 5.600 6"><g fill="none" stroke="#f2f2f2" stroke-width=".55" stroke-linecap="round"><rect x="1.900" y=".7" width="1.700" height="2.800" rx=".85" fill="#f2f2f2" stroke="none"/><path d="M1.200 3a1.550 1.550 0 0 0 3.100 0M2.750 4.600v.9"/><path d="M.7.600L4.900 5.400" stroke="#151515" stroke-width="1.100"/><path d="M.7.600L4.900 5.400"/></g></svg></div>
<div class="abs" style="left:5.600px;top:465px;width:53.200px;height:9.300px;background:#121212;border-radius:1.600px"></div>
<div class="tl" style="left:7.800px;top:468px;font-size:4.800px;font-weight:bold;color:#fff;letter-spacing:-.12px">Konto Test29</div>
<div class="abs" style="left:39.600px;top:469.200px;width:4.600px;height:.6px;background:#555"></div>
<svg class="ico" style="left:48.600px;top:467px" width="5.400" height="5.400" viewBox="0 0 5.400 5.400" stroke="#e8e8e8" stroke-width=".6"><path d="M2.700.3v4.800M.3 2.700h4.800"/></svg>
<div id="taskbar" class="abs"></div>
<svg class="ico" style="left:8.900px;top:485px" width="9.800" height="10.100" viewBox="0 0 98 101"><defs><linearGradient id="wg" x1="0" y1="0" x2="0" y2="1"><stop offset="0" stop-color="#6fd2ff"/><stop offset="1" stop-color="#1fa0f2"/></linearGradient></defs><g fill="url(#wg)"><rect width="46" height="47" rx="3"/><rect x="52" width="46" height="47" rx="3"/><rect y="54" width="46" height="47" rx="3"/><rect x="52" y="54" width="46" height="47" rx="3"/></g></svg>
<div class="abs" style="left:24px;top:483px;width:91.400px;height:14px;border-radius:7px;background:linear-gradient(90deg,#3c3a39,#36373b)"></div>
<svg class="ico" style="left:28.900px;top:487px" width="7" height="7.400" viewBox="0 0 7 7.400" fill="none" stroke="#f0f0f0" stroke-width=".85" stroke-linecap="round"><circle cx="2.900" cy="2.900" r="2.200"/><path d="M4.600 4.700l1.800 2"/></svg>
<div class="tl" style="left:38.800px;top:488px;font-size:5.400px;color:#d2d2d2">Wyszukaj</div>
<svg class="ico" style="left:120px;top:485px" width="11.200" height="9.400" viewBox="0 0 11.200 9.400"><rect x="0" y="2.800" width="7" height="6.400" rx=".8" fill="#5b5d61"/><rect x="2.800" y="0" width="8.200" height="6.800" rx=".8" fill="#e4e4e4"/><rect x="2.800" y="0" width="8.200" height="1.200" fill="#f6f6f6"/></svg>
<svg class="ico" style="left:138.800px;top:484.600px" width="10.600" height="10.600" viewBox="0 0 10.600 10.600"><rect x=".4" y=".4" width="7.600" height="7.600" rx=".8" fill="#f6f6f6" stroke="#d8564a" stroke-width=".6"/><rect x="2.300" y="2.300" width="3.800" height="3.800" fill="#e2e2e6" stroke="#d8766c" stroke-width=".35"/><path d="M5 6.200l4.600 1.600M5.600 9.800l3.600-4" stroke="#2c8ad8" stroke-width=".9" fill="none" stroke-linecap="round"/></svg>
<svg class="ico" style="left:156.800px;top:485.400px" width="10.600" height="9.200" viewBox="0 0 10.600 9.200"><path d="M0 1a1 1 0 0 1 1-1h2.800l1.200 1.400h4.600a1 1 0 0 1 1 1V8.200a1 1 0 0 1-1 1H1a1 1 0 0 1-1-1z" fill="#f0b421"/><path d="M0 3h10.600v5.200a1 1 0 0 1-1 1H1a1 1 0 0 1-1-1z" fill="#ffd95a"/><path d="M2 6.400h6.600v2.800H2z" fill="#2f86d8"/><path d="M2 6.400h6.600v.9H2z" fill="#5aaaf0"/></svg>
<svg class="ico" style="left:174.800px;top:484.300px" width="11.200" height="11.200" viewBox="0 0 112 112"><defs><radialGradient id="ff" cx=".72" cy=".22" r=".95"><stop offset="0" stop-color="#ffe54a"/><stop offset=".35" stop-color="#ffa226"/><stop offset=".7" stop-color="#ff5a2a"/><stop offset="1" stop-color="#e8206a"/></radialGradient></defs><circle cx="56" cy="60" r="46" fill="url(#ff)"/><path d="M58 6c10 8 14 16 14 24 10 2 20 10 24 22 4-18-6-38-38-46z" fill="#ffc02e"/><path d="M18 34c2-8 8-14 12-16 0 6 2 10 6 12-8 0-14 2-18 4z" fill="#ff8a1f"/><circle cx="52" cy="62" r="20" fill="#7a35d0"/><path d="M36 48c8-8 24-8 32 0-8-2-16 2-18 8s4 14 12 14c-12 8-26 0-30-10 0-4 2-8 4-12z" fill="#ff9a2a"/></svg>
<div class="abs" style="left:190.800px;top:482.300px;width:16px;height:15.500px;border-radius:1.800px;background:#2b2d35"></div>
<svg class="ico" style="left:193.500px;top:485.200px" width="9.600" height="9.600" viewBox="0 0 74 78"><circle cx="56" cy="17" r="9" fill="#5b5fc7"/><circle cx="30" cy="12" r="12" fill="#7b83eb"/><rect x="46" y="30" width="26" height="30" rx="8" fill="#5059c9"/><path d="M8 30h44v26a22 22 0 0 1-44 0z" fill="#7b83eb"/><rect x="0" y="26" width="36" height="36" rx="4" fill="#4b53bc"/><path d="M9 35h18v5h-6v17h-6V40H9z" fill="#fff"/></svg>
<div class="abs" style="left:200px;top:484.100px;width:5.200px;height:5.200px;border-radius:50%;background:#d92c3a"></div>
<div class="abs" style="left:195.600px;top:495.800px;width:6.200px;height:1.200px;border-radius:.6px;background:#56c0f5"></div>
<svg class="ico" style="left:650.400px;top:485.800px" width="10.800" height="9" viewBox="0 0 108 90"><circle cx="74" cy="30" r="24" fill="#f5a22a"/><path d="M28 88a24 24 0 0 1-4-47 30 30 0 0 1 57 5 21 21 0 0 1 3 42z" fill="#c4dcf6"/><path d="M28 88a24 24 0 0 1-14-8h84a21 21 0 0 1-14 8z" fill="#8fb8e8"/></svg>
<div class="tl" style="left:664px;top:485.900px;font-size:4.900px;color:#f2f2f2">11°C</div>
<div class="tl" style="left:664px;top:492.300px;font-size:4.900px;color:#cfcfcf">Duże zachmurze...</div>
<svg class="ico" style="left:718.800px;top:488px" width="5" height="3.400" viewBox="0 0 5 3.400" fill="none" stroke="#ececec" stroke-width=".75" stroke-linecap="round" stroke-linejoin="round"><path d="M.5 2.800l2-2.100 2 2.100"/></svg>
<div class="abs" style="left:728px;top:482px;width:13px;height:16px;border-radius:1.600px;background:#2e3138"></div>
<svg class="ico" style="left:730.800px;top:486px" width="7.600" height="8.200" viewBox="0 0 5.600 6"><g fill="none" stroke="#f2f2f2" stroke-width=".55" stroke-linecap="round"><rect x="1.900" y=".7" width="1.700" height="2.800" rx=".85" fill="#f2f2f2" stroke="none"/><path d="M1.200 3a1.550 1.550 0 0 0 3.100 0M2.750 4.600v.9"/><path d="M.7.600L4.900 5.400" stroke="#2e3138" stroke-width="1.100"/><path d="M.7.600L4.900 5.400"/></g></svg>
<svg class="ico" style="left:744px;top:486.200px" width="8" height="7.600" viewBox="0 0 8 7.600" fill="none" stroke="#ececec" stroke-width=".7"><rect x=".4" y=".5" width="5.800" height="4.600" rx=".6"/><path d="M2 6.800h2.600"/><rect x="4.800" y="3" width="2.800" height="3.800" rx=".5" fill="#1d2026"/></svg>
<svg class="ico" style="left:754.200px;top:486.600px" width="7" height="6.400" viewBox="0 0 7 6.400" fill="none" stroke="#ececec" stroke-width=".65" stroke-linejoin="round" stroke-linecap="round"><path d="M.4 2.200h1.400L3.600.5v5.400L1.800 4.200H.4z"/><path d="M4.800 2.200c.5.600.5 1.400 0 2" stroke="#8a8a8a"/><path d="M5.700 1.300c1 1.200 1 2.600 0 3.800" stroke="#6a6a6a"/></svg>
<div class="tl" style="right:8px;top:486.300px;font-size:4.900px;color:#f2f2f2">17:23</div>
<div class="tl" style="right:8px;top:492.300px;font-size:4.900px;color:#f2f2f2">19.03.2026</div>
</body></html>
